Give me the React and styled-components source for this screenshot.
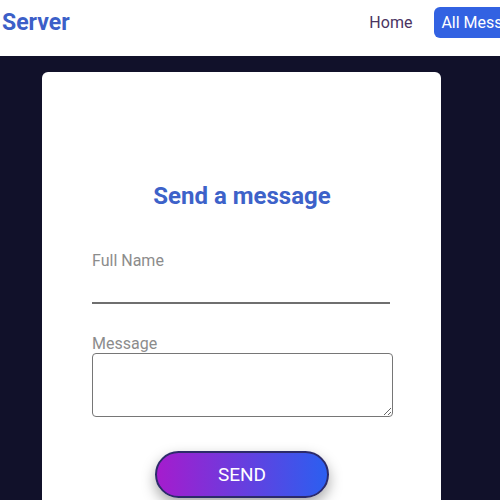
import React from "react";
import styled, { createGlobalStyle } from "styled-components";

const GlobalStyle = createGlobalStyle`
    html, body {
        margin: 0;
        padding: 0;
        overflow: hidden;
        background: #11112a;
        font-family: Roboto, "Liberation Sans", sans-serif;
    }
`;

const ScNav = styled.nav`
    display: flex;
    align-items: center;
    justify-content: space-between;
    width: 544px;
    height: 56px;
    padding: 0 0 0 2px;
    box-sizing: border-box;
    background: #ffffff;
`;

const ScBrand = styled.div`
    font-size: 23px;
    font-weight: 700;
    color: #3c5fc8;
    margin-top: -12px;
`;

const ScLinks = styled.div`
    display: flex;
    align-items: center;
    gap: 22px;
    margin-top: -12px;
`;

const ScLink = styled.a`
    font-size: 16px;
    color: ${({ $active }) => ($active ? "#ffffff" : "#4a3462")};
    background: ${({ $active }) => ($active ? "#3262e2" : "transparent")};
    padding: ${({ $active }) => ($active ? "6px 7px" : "0")};
    border-radius: 6px;
    text-decoration: none;
    white-space: nowrap;
`;

const ScMain = styled.main`
    display: flex;
    padding: 16px 0 0 42px;
`;

const ScCard = styled.div`
    width: 399px;
    height: 440px;
    background: #ffffff;
    border-radius: 6px;
    box-sizing: border-box;
    padding: 110px 49px 0 50px;
    display: flex;
    flex-direction: column;
`;

const ScTitle = styled.h2`
    margin: 0 0 41px;
    text-align: center;
    font-size: 24px;
    font-weight: 700;
    color: #3d62c9;
`;

const ScLabel = styled.label`
    display: block;
    font-size: 16px;
    color: #8c8c8c;
`;

const ScGroup = styled.div`
    margin-bottom: ${({ $mb }) => $mb || "0"};
`;

const ScInput = styled.input`
    display: block;
    width: 298px;
    height: 24px;
    margin-top: 8px;
    border: none;
    border-bottom: 2px solid #6f6f6f;
    outline: none;
    background: transparent;
    padding: 0;
`;

const ScTextarea = styled.textarea`
    display: block;
    width: 301px;
    height: 64px;
    margin-top: 0;
    box-sizing: border-box;
    border: 1px solid #767676;
    border-radius: 4px;
    resize: vertical;
    outline: none;
`;

const ScButton = styled.button`
    align-self: center;
    margin: 34px 0 0 0;
    width: 174px;
    height: 47px;
    border-radius: 24px;
    border: 2px solid #2c2b6a;
    background: linear-gradient(to right, #a51ccd, #2b5ff0);
    color: #ffffff;
    font-family: inherit;
    font-size: 19px;
    box-shadow: 0 6px 14px rgba(0, 0, 0, 0.35);
`;

export default function App() {
    return (
        <>
            <GlobalStyle />
            <ScNav>
                <ScBrand>Server</ScBrand>
                <ScLinks>
                    <ScLink href="#">Home</ScLink>
                    <ScLink href="#" $active>
                        All Messages
                    </ScLink>
                </ScLinks>
            </ScNav>
            <ScMain>
                <ScCard>
                    <ScTitle>Send a message</ScTitle>
                    <ScGroup $mb="30px">
                        <ScLabel>Full Name</ScLabel>
                        <ScInput type="text" />
                    </ScGroup>
                    <ScGroup>
                        <ScLabel>Message</ScLabel>
                        <ScTextarea />
                    </ScGroup>
                    <ScButton>SEND</ScButton>
                </ScCard>
            </ScMain>
        </>
    );
}
